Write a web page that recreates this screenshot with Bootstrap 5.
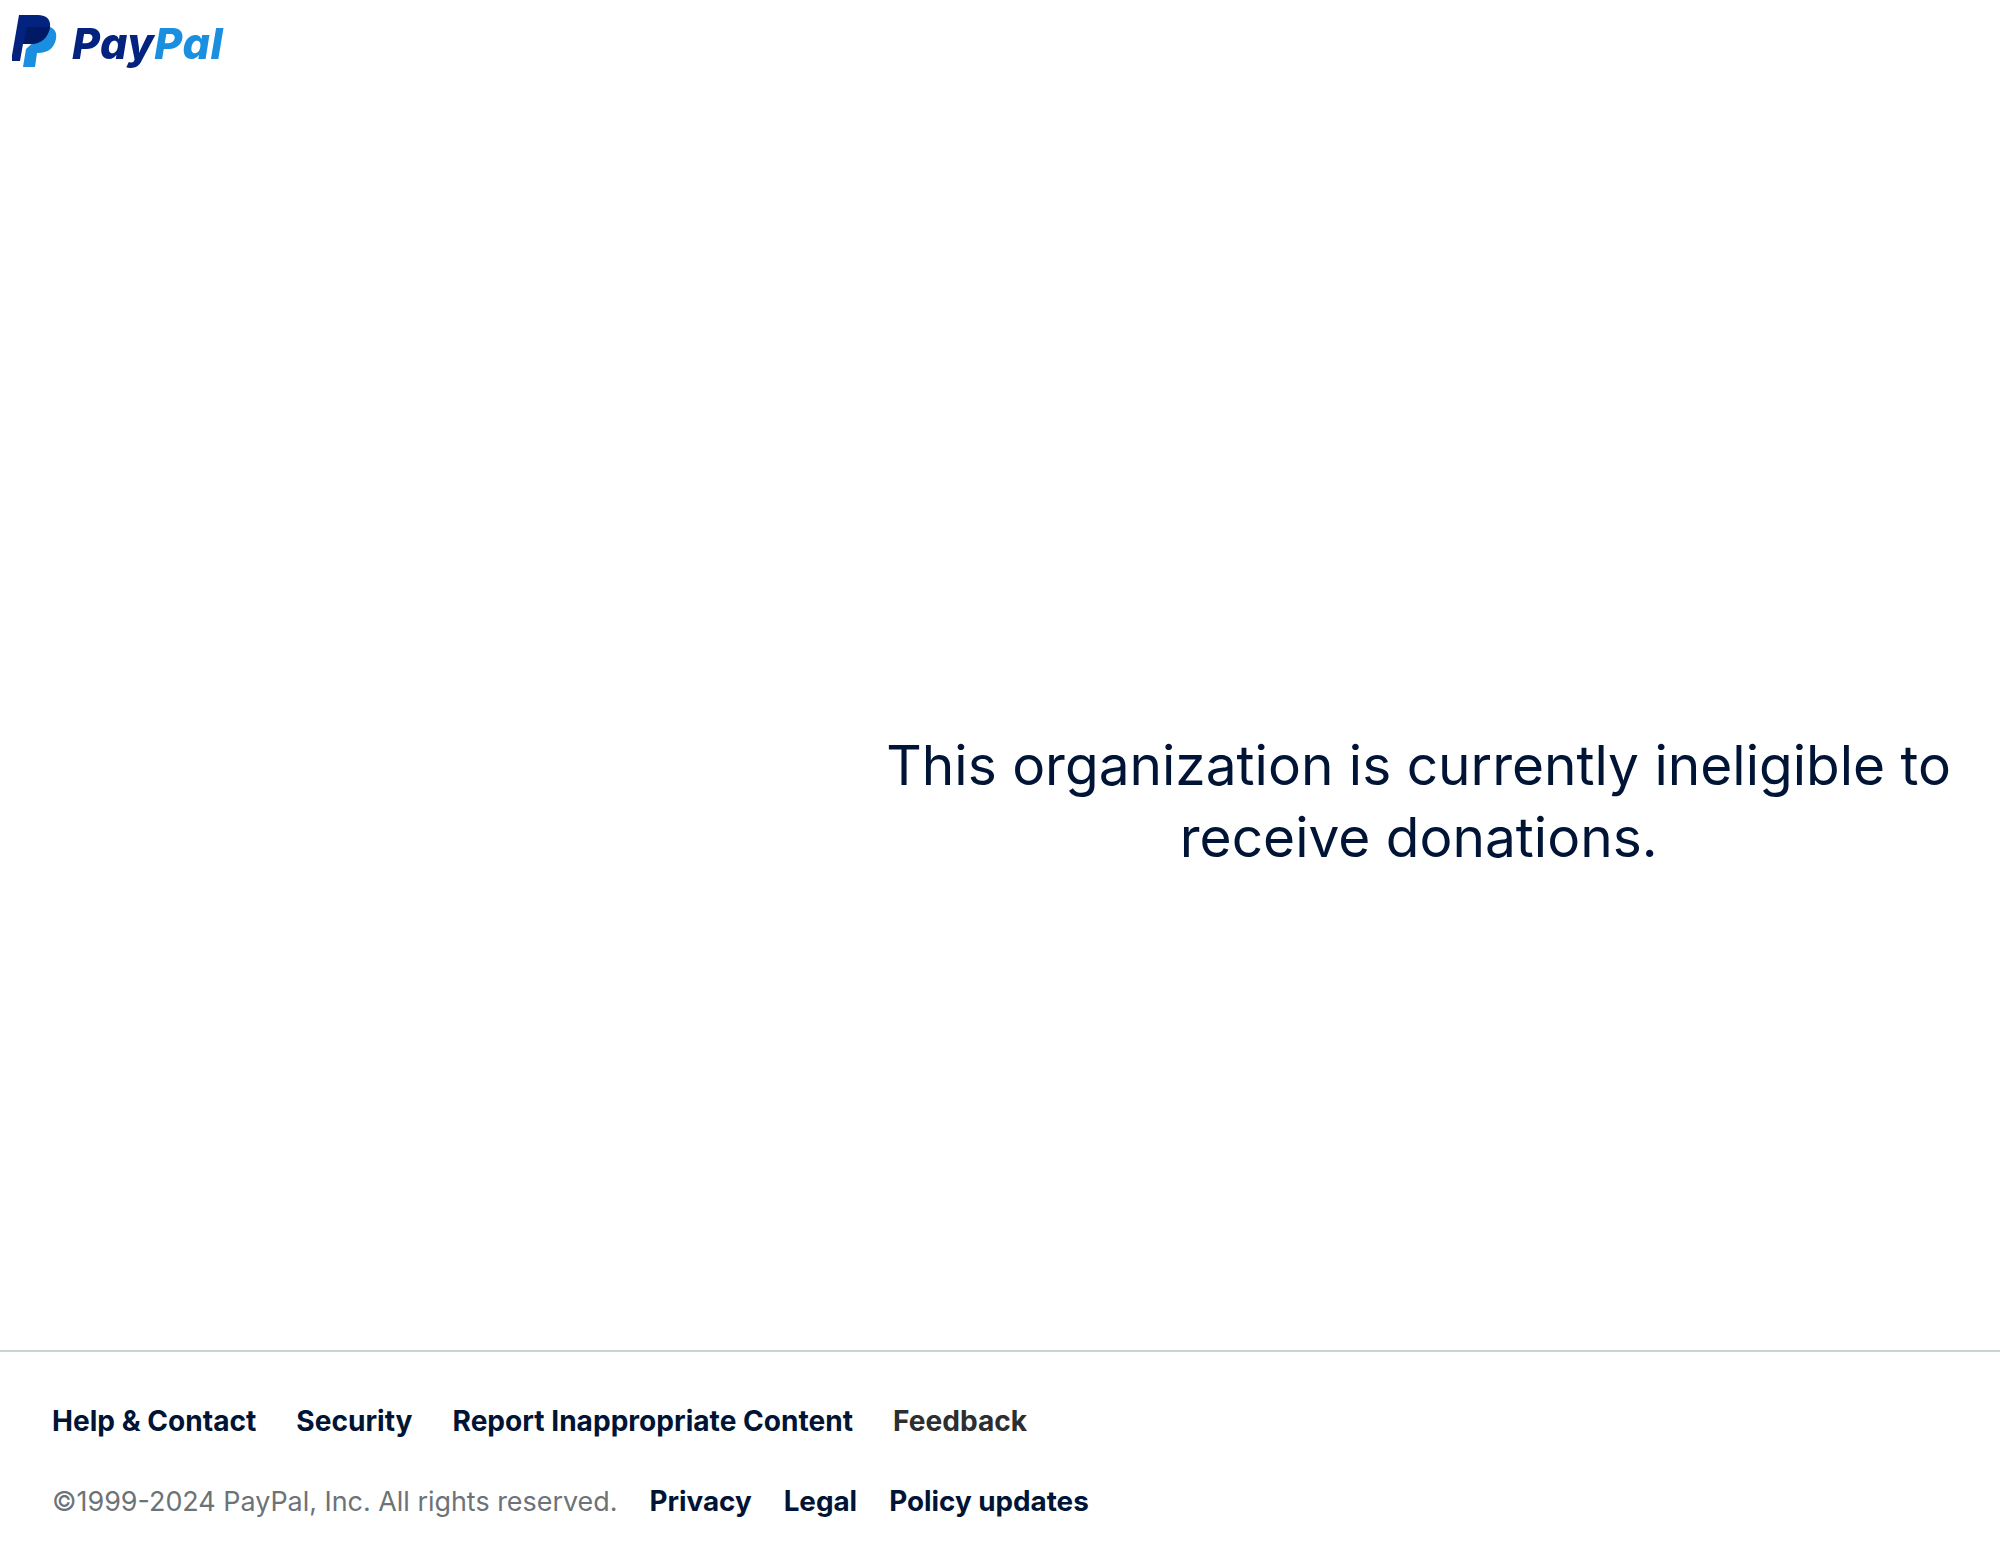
<!DOCTYPE html>
<html lang="en">
<head>
<meta charset="utf-8">
<title>PayPal</title>
<link href="https://cdn.jsdelivr.net/npm/bootstrap@5.3.0/dist/css/bootstrap.min.css" rel="stylesheet">
<style>
html,body{height:100%;}
body{font-family:Inter,"Liberation Sans",sans-serif;color:#001435;background:#fff;}
.pp-shell{height:1564px;overflow:hidden;}
.pp-head{height:90px;padding:15px 0 0 12px;}
.pp-logo{filter:blur(.6px);display:block;}
.pp-word{font-family:Inter,"Liberation Sans",sans-serif;font-weight:800;font-style:italic;font-size:43px;letter-spacing:.5px;}
.pp-main{height:1260px;padding-top:162px;}
.pp-msg{font-size:55px;line-height:72px;font-weight:400;letter-spacing:0;margin:0;padding:0 40px 0 44px;}
.pp-foot{border-top:2px solid #cbd2d6;height:214px;padding:51px 52px 0;}
.pp-links{gap:40px;font-size:28.1px;line-height:36px;}
.pp-links2{gap:32px;font-size:27.8px;line-height:36px;margin-top:44px;}
.pp-foot a{color:#001435;font-weight:700;text-decoration:none;}
.pp-foot a.pp-fb{color:#2c2e2f;}
.pp-copy{color:#6c7378;font-size:26.9px;}
</style>
</head>
<body>
<div class="pp-shell d-flex flex-column">
  <header class="pp-head">
    <svg class="pp-logo" width="216" height="54" viewBox="12 15 216 54" role="img" aria-label="PayPal">
      <path fill="#1a8fe0" d="M50 27c5 2 7 6 6 12-2 9-8 14-18 14h-1l-2 14H23l3-18z"/>
      <path fill="#03237f" d="M19 15h19c8 0 13 4 12 12-2 11-9 17-20 17h-7l-3 17H11z"/>
      <path fill="#001a66" d="M27 27h23c-2 11-9 17-20 17h-7z"/>
      <text class="pp-word" x="72" y="59" fill="#03237f">Pay<tspan fill="#1a8fe0">Pal</tspan></text>
    </svg>
  </header>
  <main class="pp-main row g-0 align-items-center">
    <div class="col-7 offset-5 text-center">
      <h1 class="pp-msg">This organization is currently ineligible to receive donations.</h1>
    </div>
  </main>
  <footer class="pp-foot">
    <div class="pp-links d-flex">
      <a href="#">Help &amp; Contact</a>
      <a href="#">Security</a>
      <a href="#">Report Inappropriate Content</a>
      <a href="#" class="pp-fb">Feedback</a>
    </div>
    <div class="pp-links2 d-flex align-items-baseline">
      <span class="pp-copy">©1999-2024 PayPal, Inc. All rights reserved.</span>
      <a href="#">Privacy</a>
      <a href="#">Legal</a>
      <a href="#">Policy updates</a>
    </div>
  </footer>
</div>
<script src="https://cdn.jsdelivr.net/npm/bootstrap@5.3.0/dist/js/bootstrap.bundle.min.js"></script>
</body>
</html>
